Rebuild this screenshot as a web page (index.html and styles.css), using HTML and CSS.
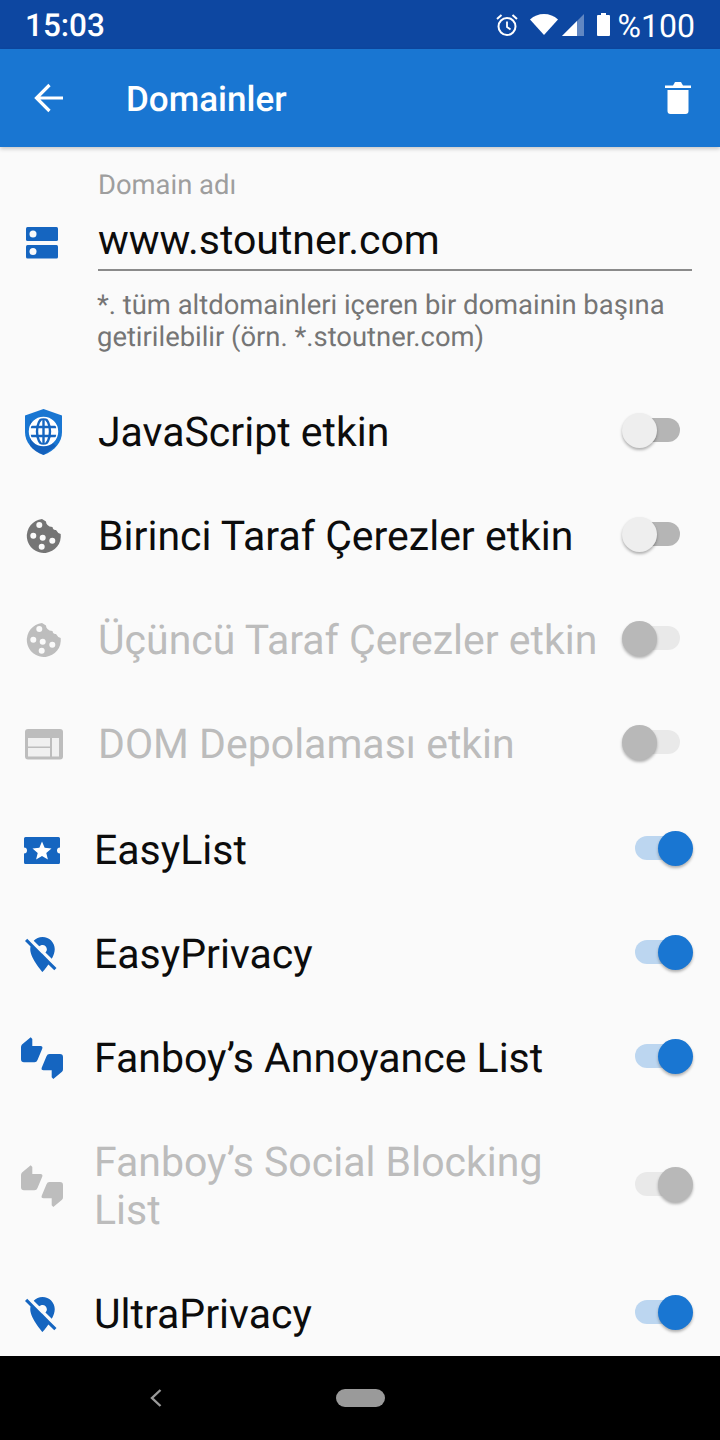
FILE: index.html
```html
<!DOCTYPE html>
<html lang="tr">
<head>
  <meta charset="UTF-8">
  <meta name="viewport" content="width=device-width, initial-scale=1">
  <title>Domainler</title>
  <link rel="stylesheet" href="styles.css">
</head>
<body>
  <svg class="defs" width="0" height="0">
    <defs>
      <symbol id="cookie" viewBox="0 0 48 48">
        <path fill-rule="evenodd" d="M22 7.100A17 17 0 1 0 40.700 22Q37.500 21 36 18Q33 18.500 32.500 15Q29 15 27.500 13Q26 11.500 26 9.500Q24 8.500 22 7.100zM19.300 10a3 3 0 1 1 0 6 3 3 0 0 1 0-6zM13.300 20.700a3 3 0 1 1 0 6 3 3 0 0 1 0-6zM22.700 22.700a3 3 0 1 1 0 6 3 3 0 0 1 0-6zM32.300 25.700a3 3 0 1 1 0 6 3 3 0 0 1 0-6zM21.700 31.700a3 3 0 1 1 0 6 3 3 0 0 1 0-6z"/>
      </symbol>
      <symbol id="pin-off" viewBox="0 0 48 48">
        <path transform="translate(1.500 3.500) scale(1.750)" d="M12 6.500c1.380 0 2.500 1.120 2.500 2.500 0 .74-.33 1.390-.83 1.850l3.630 3.630c.98-1.860 1.700-3.800 1.700-5.480 0-3.870-3.130-7-7-7-1.980 0-3.760.83-5.040 2.150l3.190 3.190c.46-.52 1.110-.84 1.850-.84zm4.370 9.600l-4.630-4.630-.11-.11L3.270 3 2 4.270l3.180 3.180C5.070 7.950 5 8.470 5 9c0 5.250 7 13 7 13s1.670-1.850 3.380-4.350L18.730 21 20 19.730l-3.630-3.630z"/>
      </symbol>
      <symbol id="thumbs" viewBox="0 1 48 48">
        <path id="thumb" d="M10.700 4.300L12.300 6V13H20.500Q23 13 22.300 15.500L17.500 27Q16.700 29.300 14.500 29.300H4Q1 29.300 1 26.300V14Q1 12.500 2 11.500Z"/>
        <use href="#thumb" transform="rotate(180 22 25.150)"/>
      </symbol>
    </defs>
  </svg>

  <div class="status-bar">
    <span class="clock">15:03</span>
    <div class="status-icons">
      <svg class="alarm" width="22" height="24" viewBox="0 0 22 24" fill="none" stroke="#fff">
        <circle cx="11" cy="13.500" r="8.500" stroke-width="2"/>
        <path d="M11 8.500v5.500l3.500 2.500" stroke-width="1.800"/>
        <path d="M1 6l4.500-4M21 6l-4.500-4" stroke-width="2"/>
      </svg>
      <svg class="wifi" width="28" height="21" viewBox="0 0 28 21"><path d="M14 21L0 5.500Q6 0 14 0t14 5.500z" fill="#fff"/></svg>
      <svg class="signal" width="22" height="22" viewBox="0 0 22 22">
        <path d="M0 22L22 0v22z" fill="#fff" fill-opacity=".35"/>
        <path d="M0 22L15 7v15z" fill="#fff"/>
      </svg>
      <svg class="battery" width="13" height="23" viewBox="0 0 13 23"><path d="M4 0h5v2h3a1 1 0 0 1 1 1v19a1 1 0 0 1-1 1H1a1 1 0 0 1-1-1V3a1 1 0 0 1 1-1h3z" fill="#fff"/></svg>
      <span class="battery-text">%100</span>
    </div>
  </div>

  <header class="app-bar">
    <svg class="back" width="30" height="30" viewBox="0 0 30 30" fill="none" stroke="#fff" stroke-width="3.200"><path d="M29 15H3M15.500 2L2.500 15l13 13"/></svg>
    <h1 class="title">Domainler</h1>
    <svg class="trash" width="26" height="32" viewBox="0 0 26 32"><path d="M0 3.500h8L9.500 1a1 1 0 0 1 1-1h5a1 1 0 0 1 1 1L18 3.500h8V6H0zM2.500 8h21v21a3 3 0 0 1-3 3h-15a3 3 0 0 1-3-3z" fill="#fff"/></svg>
  </header>

  <main class="content">
    <section class="domain">
      <div class="domain-row">
        <svg class="icon" width="48" height="48" viewBox="0 0 48 48">
          <rect x="6" y="8" width="32" height="14" rx="1.500" fill="#1565c0"/>
          <rect x="6" y="26" width="32" height="13.500" rx="1.500" fill="#1565c0"/>
          <circle cx="13" cy="15" r="3.500" fill="#fafafa"/>
          <circle cx="13" cy="32.500" r="3.500" fill="#fafafa"/>
        </svg>
        <div class="field">
          <label class="field-label" for="domainName">Domain adı</label>
          <input class="field-input" id="domainName" type="text" value="www.stoutner.com">
        </div>
      </div>
      <p class="hint">*. tüm altdomainleri içeren bir domainin başına getirilebilir (örn. *.stoutner.com)</p>
    </section>

    <div class="row">
      <svg class="icon" width="48" height="48" viewBox="0 0 48 48">
        <path d="M23.500 1L42 7.500V24c0 10-7 18.500-18.500 23C12 42.500 5 34 5 24V7.500z" fill="#1976d2"/>
        <path d="M10 12l26 26-12.500 9c-6-2-10-5-13.500-9z" fill="#0d47a1" fill-opacity=".45"/>
        <circle cx="23.500" cy="23.500" r="14" fill="#fff"/>
        <g fill="none" stroke="#1565c0" stroke-width="2.400">
          <ellipse cx="23.500" cy="23.500" rx="6.500" ry="13"/>
          <path d="M23.500 10v27M10.500 19h26M10.500 28h26"/>
        </g>
        <circle cx="23.500" cy="23.500" r="14" fill="none" stroke="#fff" stroke-width="1.500"/>
      </svg>
      <span class="label">JavaScript etkin</span>
      <span class="switch"><span class="thumb"></span></span>
    </div>

    <div class="row">
      <svg class="icon icon-gray" width="48" height="48"><use href="#cookie"/></svg>
      <span class="label">Birinci Taraf Çerezler etkin</span>
      <span class="switch"><span class="thumb"></span></span>
    </div>

    <div class="row row-disabled">
      <svg class="icon icon-gray" width="48" height="48"><use href="#cookie"/></svg>
      <span class="label">Üçüncü Taraf Çerezler etkin</span>
      <span class="switch"><span class="thumb"></span></span>
    </div>

    <div class="row row-disabled">
      <svg class="icon" width="48" height="48" viewBox="0 0 48 48">
        <rect x="5" y="9" width="38" height="30.500" rx="3" fill="#bdbdbd"/>
        <path d="M8 18h22v8.500H8zM8 28h22v8.500H8zM32 18h7v18.500h-7z" fill="#f0f0f0"/>
      </svg>
      <span class="label">DOM Depolaması etkin</span>
      <span class="switch"><span class="thumb"></span></span>
    </div>

    <div class="row row-list row-first-list">
      <svg class="icon" width="48" height="48" viewBox="0 0 48 48">
        <path d="M5.500 11h33a1.500 1.500 0 0 1 1.500 1.500V21.500a3 3 0 0 0 0 6v9a1.500 1.500 0 0 1-1.500 1.500h-33A1.500 1.500 0 0 1 4 36.500v-9a3 3 0 0 0 0-6v-9A1.500 1.500 0 0 1 5.500 11z" fill="#1565c0"/>
        <path d="M22 15.500L24.650 21.860 31.500 22.400 26.280 26.890 27.900 33.600 22 30 16.100 33.600 17.720 26.890 12.500 22.400 19.350 21.860z" fill="#fff"/>
      </svg>
      <span class="label">EasyList</span>
      <span class="switch switch-on"><span class="thumb"></span></span>
    </div>

    <div class="row row-list">
      <svg class="icon icon-blue" width="48" height="48"><use href="#pin-off"/></svg>
      <span class="label">EasyPrivacy</span>
      <span class="switch switch-on"><span class="thumb"></span></span>
    </div>

    <div class="row row-list">
      <svg class="icon icon-blue" width="48" height="48"><use href="#thumbs"/></svg>
      <span class="label">Fanboy’s Annoyance List</span>
      <span class="switch switch-on"><span class="thumb"></span></span>
    </div>

    <div class="row row-list row-disabled row-tall">
      <svg class="icon icon-gray" width="48" height="48"><use href="#thumbs"/></svg>
      <span class="label">Fanboy’s Social Blocking List</span>
      <span class="switch switch-on"><span class="thumb"></span></span>
    </div>

    <div class="row row-list">
      <svg class="icon icon-blue" width="48" height="48"><use href="#pin-off"/></svg>
      <span class="label">UltraPrivacy</span>
      <span class="switch switch-on"><span class="thumb"></span></span>
    </div>
  </main>

  <nav class="nav-bar">
    <svg class="nav-back" width="12" height="18" viewBox="0 0 12 18" fill="none" stroke="#9a9a9a" stroke-width="2.400"><path d="M10.500 1L2 9l8.500 8"/></svg>
    <span class="nav-home"></span>
  </nav>
</body>
</html>
```

FILE: styles.css
```css
* {
  box-sizing: border-box;
}
html, body {
  margin: 0;
  height: 1440px;
}
body {
  display: flex;
  flex-direction: column;
  overflow: hidden;
  font-family: Roboto, "Noto Sans", sans-serif;
  text-rendering: geometricPrecision;
  background-color: #fafafa;
  color: #0c0c0c;
}
.defs {
  display: none;
}

/* status bar */
.status-bar {
  flex: none;
  height: 49px;
  display: flex;
  align-items: center;
  justify-content: space-between;
  padding: 0 25px 0 25px;
  background-color: #0d47a1;
  color: #fff;
}
.clock {
  padding-top: 2px;
  font-size: 31.500px;
  font-weight: 500;
}
.status-icons {
  display: flex;
  align-items: center;
}
.alarm {
  margin-right: 12px;
}
.wifi {
  margin-right: 4px;
}
.signal {
  margin-right: 13px;
}
.battery {
  margin-right: 8px;
}
.battery-text {
  padding-top: 2px;
  font-size: 32px;
}

/* app bar */
.app-bar {
  flex: none;
  position: relative;
  z-index: 1;
  height: 98px;
  display: flex;
  align-items: center;
  padding: 0 29px 0 34px;
  background-color: #1976d2;
  color: #fff;
  box-shadow: 0 2px 4px rgba(0,0,0,0.2);
}
.title {
  flex: 1;
  margin: 2px 0 0 62px;
  font-size: 35px;
  font-weight: 500;
}

/* content */
.content {
  flex: 1;
  min-height: 0;
  overflow: hidden;
}
.domain {
  height: 233px;
  padding: 23px 28px 0 20px;
}
.domain-row {
  display: flex;
  align-items: flex-end;
}
.domain-row .icon {
  margin-bottom: 4px;
}
.field {
  flex: 1;
  margin-left: 30px;
}
.field-label {
  display: block;
  font-size: 27.400px;
  line-height: 30px;
  color: #9e9e9e;
}
.field-input {
  display: block;
  width: 100%;
  height: 71px;
  padding: 10px 0 0 0;
  border: 0;
  border-bottom: 2px solid #8a8a8a;
  outline: 0;
  background: none;
  font-family: inherit;
  font-size: 41px;
  color: #0c0c0c;
}
.hint {
  margin: 18px 0 0 77px;
  font-size: 27.400px;
  line-height: 32px;
  color: #757575;
}

/* rows */
.row {
  height: 104px;
  display: flex;
  align-items: center;
  padding: 0 27px 0 20px;
}
.row-first-list {
  margin-top: 2px;
}
.row-tall {
  height: 152px;
}
.icon {
  flex: none;
}
.icon-gray {
  fill: #757575;
  color: #757575;
}
.icon-blue {
  fill: #1565c0;
  color: #1565c0;
}
.label {
  flex: 1;
  margin-left: 30px;
  padding-top: 1px;
  font-size: 41px;
  line-height: 48px;
}
.row-list .label {
  margin-left: 26px;
}
.switch {
  flex: none;
  position: relative;
  width: 71px;
  height: 35px;
  margin-left: 12px;
  margin-top: -3px;
}
.switch::before {
  content: "";
  position: absolute;
  top: 5px;
  left: 13px;
  width: 45px;
  height: 24px;
  border-radius: 12px;
  background-color: #b5b5b5;
}
.thumb {
  position: absolute;
  top: 0;
  left: 0;
  width: 35px;
  height: 35px;
  border-radius: 50%;
  background-color: #eeeeee;
  box-shadow: 0 2px 3px rgba(0,0,0,0.3);
}
.switch-on .thumb {
  left: 36px;
  background-color: #1976d2;
}
.switch-on::before {
  background-color: #bcd6f0;
}

/* disabled rows */
.row-disabled .label {
  color: #bcbcbc;
}
.row-disabled .icon-gray {
  fill: #bdbdbd;
  color: #bdbdbd;
}
.row-disabled .switch::before {
  background-color: #e9e9e9;
}
.row-disabled .thumb {
  background-color: #b8b8b8;
}

/* nav bar */
.nav-bar {
  flex: none;
  height: 84px;
  display: flex;
  align-items: center;
  padding: 0 0 0 150px;
  background-color: #000;
}
.nav-back {
  margin-top: -1px;
}
.nav-home {
  width: 49px;
  height: 18px;
  margin-left: 174px;
  margin-top: -1px;
  border-radius: 9px;
  background-color: #9a9a9a;
}
```
